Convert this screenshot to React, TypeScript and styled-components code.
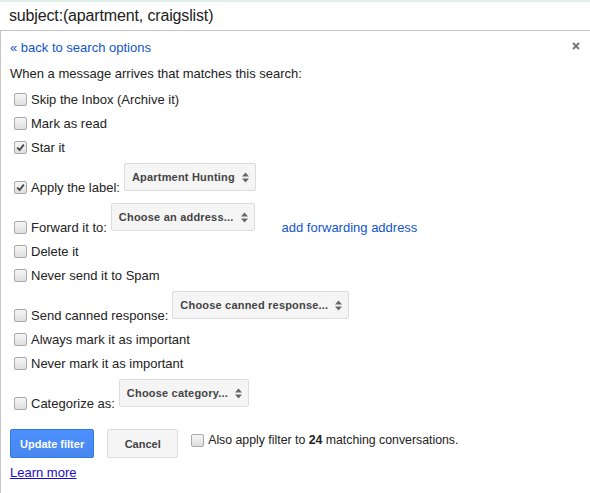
import React from "react";
import styled, { createGlobalStyle } from "styled-components";

const GlobalStyle = createGlobalStyle`
  html, body {
    margin: 0;
    padding: 0;
    background: #fff;
  }
  body {
    font-family: "Liberation Sans", Arial, sans-serif;
    color: #222;
  }
`;

const Page = styled.div`
  width: 590px;
  height: 493px;
  overflow: hidden;
  display: flex;
  flex-direction: column;
`;

const TopStrip = styled.div`
  height: 2px;
  background: #dff0e6;
`;

const SearchBar = styled.div`
  height: 28px;
  padding-left: 9px;
  font-size: 16px;
  letter-spacing: -0.15px;
  line-height: 28px;
  color: #222;
`;

const Panel = styled.div`
  flex: 1;
  border-top: 1px solid #c6c6c6;
  border-left: 1px solid #c6c6c6;
  padding: 9px 9px 0 9px;
  font-size: 13px;
`;

const HeaderRow = styled.div`
  display: flex;
  justify-content: space-between;
  align-items: center;
  height: 16px;
  line-height: 16px;
`;

const Link = styled.a<{ $dark?: boolean; $underline?: boolean }>`
  color: ${({ $dark }) => ($dark ? "#1a0dcc" : "#1155cc")};
  text-decoration: ${({ $underline }) => ($underline ? "underline" : "none")};
  cursor: pointer;
`;

const Close = styled.span`
  display: flex;
  margin-right: 1px;
  margin-top: -5px;
`;

const Intro = styled.div`
  margin-top: 10px;
  line-height: 16px;
`;

const Rows = styled.div`
  margin-top: 5px;
  display: flex;
  flex-direction: column;
`;

const Row = styled.div<{ $tall?: boolean }>`
  display: flex;
  align-items: flex-end;
  height: ${({ $tall }) => ($tall ? 40 : 24)}px;
`;

const Line = styled.label`
  display: flex;
  align-items: center;
  height: 24px;
  white-space: nowrap;
`;

const Box = styled.span`
  width: 11px;
  height: 11px;
  margin: 0 4px 0 4px;
  border: 1px solid #a9a9a9;
  border-radius: 2px;
  background: linear-gradient(#f6f6f6, #dedede);
  display: inline-flex;
  align-items: center;
  justify-content: center;
  flex-shrink: 0;
`;

const Select = styled.div`
  margin: 0 0 8px 4px;
  height: 26px;
  display: flex;
  align-items: center;
  gap: 7px;
  padding: 0 6px 0 7px;
  background: #f5f5f5;
  border: 1px solid #dcdcdc;
  border-radius: 2px;
  font-size: 11px;
  font-weight: bold;
  letter-spacing: 0.2px;
  color: #444;
  white-space: nowrap;
`;

const Side = styled(Line)`
  margin-left: 27px;
`;

const Actions = styled.div`
  margin-top: 14px;
  display: flex;
  align-items: flex-start;
  gap: 13px;
`;

const Button = styled.button<{ $primary?: boolean }>`
  height: 29px;
  min-width: 71px;
  padding: 0 9px;
  box-sizing: border-box;
  border-radius: 2px;
  font-family: inherit;
  font-size: 11px;
  font-weight: bold;
  cursor: pointer;
  border: 1px solid ${({ $primary }) => ($primary ? "#3079ed" : "#dcdcdc")};
  background: ${({ $primary }) =>
    $primary ? "linear-gradient(#4d90fe, #4787ed)" : "#f5f5f5"};
  color: ${({ $primary }) => ($primary ? "#fff" : "#444")};
`;

const ApplyAll = styled.label`
  display: flex;
  align-items: center;
  height: 16px;
  margin-top: 3px;
  margin-left: -4px;
  font-size: 12.3px;
  white-space: nowrap;
`;

const Learn = styled.div`
  margin-top: 7px;
  line-height: 16px;
`;

const Check = ({ checked }: { checked?: boolean }) => (
  <Box>
    {checked && (
      <svg width="9" height="9" viewBox="0 0 9 9">
        <path d="M1.2 4.6 L3.6 7 L7.8 1.6" fill="none" stroke="#444" strokeWidth="1.8" />
      </svg>
    )}
  </Box>
);

const Arrows = () => (
  <svg width="7" height="11" viewBox="0 0 7 11">
    <path d="M0 4.5 L3.5 0.5 L7 4.5 Z M0 6.5 L3.5 10.5 L7 6.5 Z" fill="#666" />
  </svg>
);

type Action = {
  label: string;
  checked?: boolean;
  select?: string;
  side?: string;
};

const actions: Action[] = [
  { label: "Skip the Inbox (Archive it)" },
  { label: "Mark as read" },
  { label: "Star it", checked: true },
  { label: "Apply the label:", checked: true, select: "Apartment Hunting" },
  { label: "Forward it to:", select: "Choose an address...", side: "add forwarding address" },
  { label: "Delete it" },
  { label: "Never send it to Spam" },
  { label: "Send canned response:", select: "Choose canned response..." },
  { label: "Always mark it as important" },
  { label: "Never mark it as important" },
  { label: "Categorize as:", select: "Choose category..." },
];

export default function App() {
  return (
    <Page>
      <GlobalStyle />
      <TopStrip />
      <SearchBar>subject:(apartment, craigslist)</SearchBar>
      <Panel>
        <HeaderRow>
          <Link>« back to search options</Link>
          <Close>
            <svg width="8" height="8" viewBox="0 0 8 8">
              <path d="M1 1 L7 7 M7 1 L1 7" stroke="#777" strokeWidth="2" />
            </svg>
          </Close>
        </HeaderRow>
        <Intro>When a message arrives that matches this search:</Intro>
        <Rows>
          {actions.map((a) => (
            <Row key={a.label} $tall={!!a.select}>
              <Line>
                <Check checked={a.checked} />
                {a.label}
              </Line>
              {a.select && (
                <Select>
                  {a.select}
                  <Arrows />
                </Select>
              )}
              {a.side && (
                <Side>
                  <Link>{a.side}</Link>
                </Side>
              )}
            </Row>
          ))}
        </Rows>
        <Actions>
          <Button $primary>Update filter</Button>
          <Button>Cancel</Button>
          <ApplyAll>
            <Check />
            Also apply filter to&nbsp;<b>24</b>&nbsp;matching conversations.
          </ApplyAll>
        </Actions>
        <Learn>
          <Link $dark $underline>Learn more</Link>
        </Learn>
      </Panel>
    </Page>
  );
}
